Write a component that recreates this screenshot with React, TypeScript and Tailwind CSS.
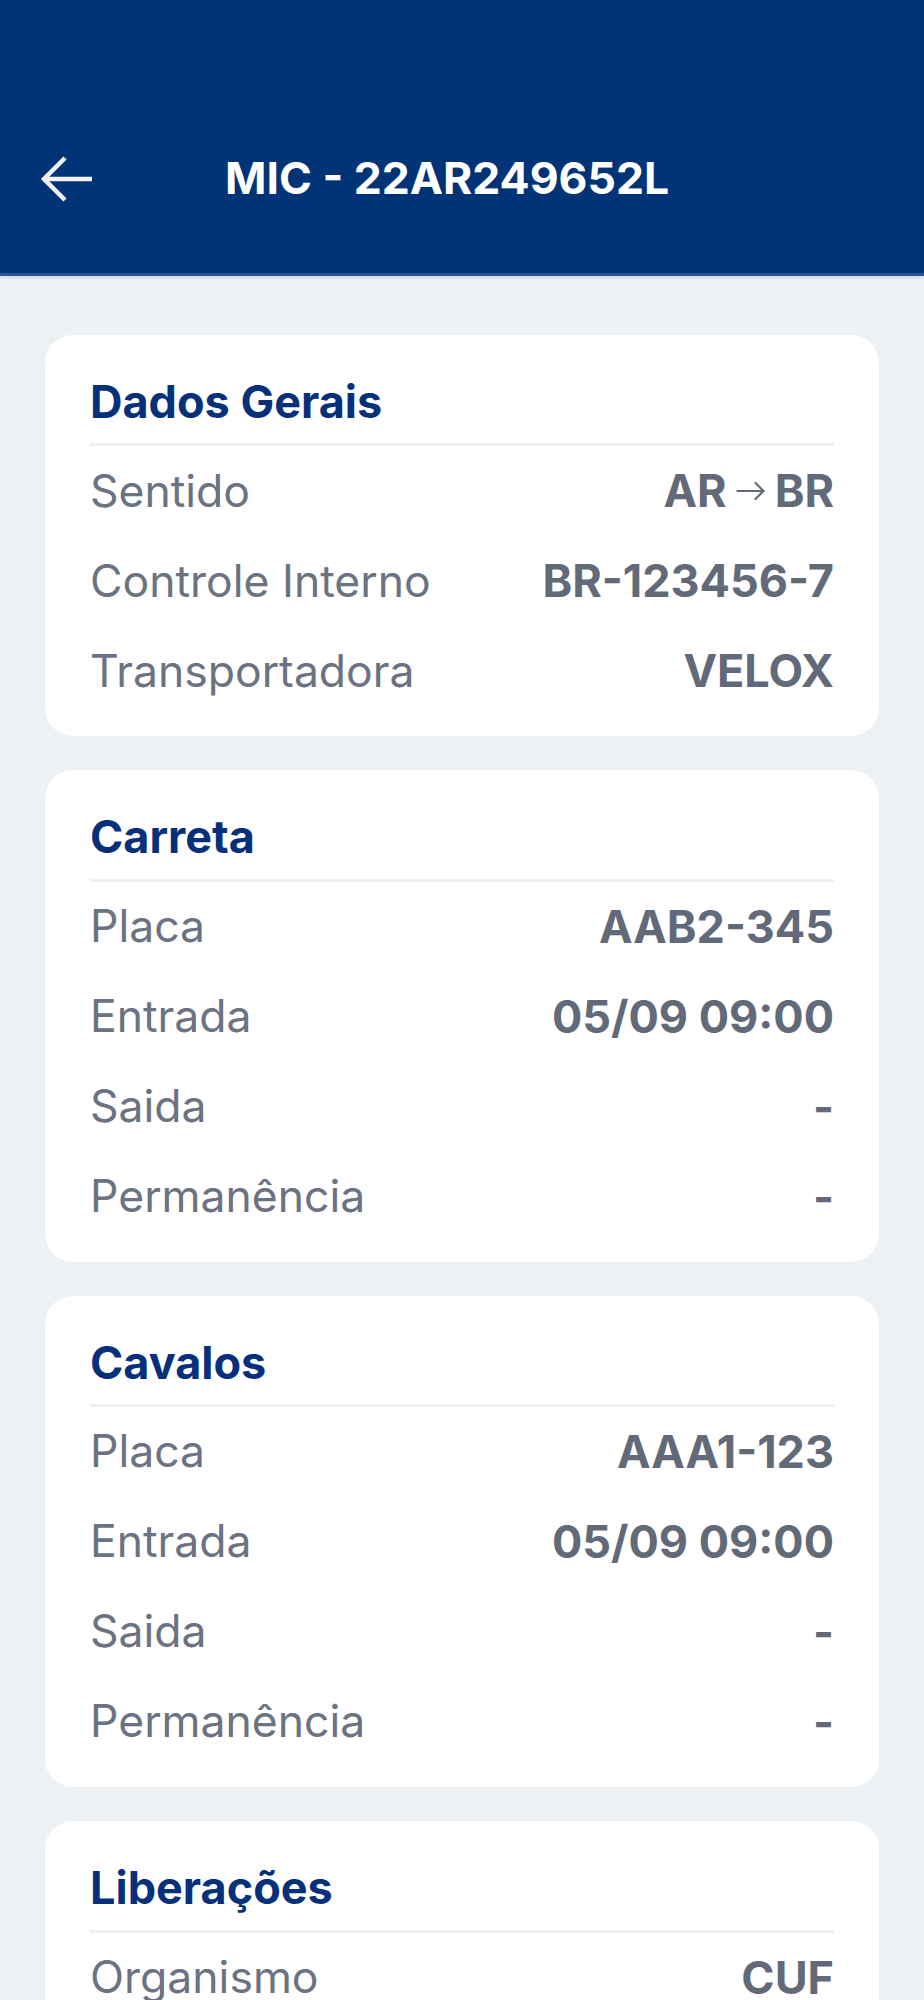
import React from "react";

type Row = { label: string; value: React.ReactNode };

const sections: { title: string; rows: Row[] }[] = [
  {
    title: "Dados Gerais",
    rows: [
      {
        label: "Sentido",
        value: (
          <span className="flex items-center gap-[9px]">
            AR
            <svg width="30" height="20" viewBox="0 0 30 20" fill="none" stroke="currentColor" strokeWidth="2.2" strokeLinecap="round" strokeLinejoin="round">
              <path d="M1.5 10h26" />
              <path d="M19.5 2l8 8-8 8" />
            </svg>
            BR
          </span>
        ),
      },
      { label: "Controle Interno", value: "BR-123456-7" },
      { label: "Transportadora", value: "VELOX" },
    ],
  },
  {
    title: "Carreta",
    rows: [
      { label: "Placa", value: "AAB2-345" },
      { label: "Entrada", value: "05/09 09:00" },
      { label: "Saida", value: "-" },
      { label: "Permanência", value: "-" },
    ],
  },
  {
    title: "Cavalos",
    rows: [
      { label: "Placa", value: "AAA1-123" },
      { label: "Entrada", value: "05/09 09:00" },
      { label: "Saida", value: "-" },
      { label: "Permanência", value: "-" },
    ],
  },
  {
    title: "Liberações",
    rows: [{ label: "Organismo", value: "CUF" }],
  },
];

function InfoCard({ title, rows }: { title: string; rows: Row[] }) {
  return (
    <div className="bg-white rounded-[28px] px-[45px] pt-[40px] pb-[20px]">
      <h2 className="text-[45px] font-bold text-[#06317a] leading-[1.21]">{title}</h2>
      <div className="h-[3px] bg-[#eef0f3] mt-[14px]" />
      {rows.map((row) => (
        <div key={row.label} className="flex items-center justify-between h-[90px]">
          <span className="text-[44.5px] text-[#6b7282] leading-[1.21]">{row.label}</span>
          <span className="text-[45px] font-bold text-[#626a7a] leading-[1.21]">{row.value}</span>
        </div>
      ))}
    </div>
  );
}

export default function App() {
  return (
    <div className="min-h-[2000px] bg-[#eef1f4]" style={{ fontFamily: "Inter, 'Noto Sans', sans-serif" }}>
      <header className="h-[276px] bg-[#003476] flex items-center pt-[85px] border-b-[3px] border-[#2b5591] shadow-[0_2px_3px_rgba(0,40,100,0.12)]">
        <button className="ml-[40px] w-[56px] h-[50px] flex items-center text-[#f2f2f2]">
          <svg width="54" height="48" viewBox="0 0 54 48" fill="none" stroke="currentColor" strokeWidth="4.5" strokeLinecap="butt" strokeLinejoin="miter">
            <path d="M52 24H5" />
            <path d="M25 3 4 24l21 21" />
          </svg>
        </button>
        <h1 className="ml-[129px] text-[44.5px] font-bold text-white leading-[1.21]">MIC - 22AR249652L</h1>
      </header>
      <main className="px-[45px] pt-[59px] pb-[40px] flex flex-col gap-[34px]">
        {sections.map((s) => (
          <InfoCard key={s.title} title={s.title} rows={s.rows} />
        ))}
      </main>
    </div>
  );
}
